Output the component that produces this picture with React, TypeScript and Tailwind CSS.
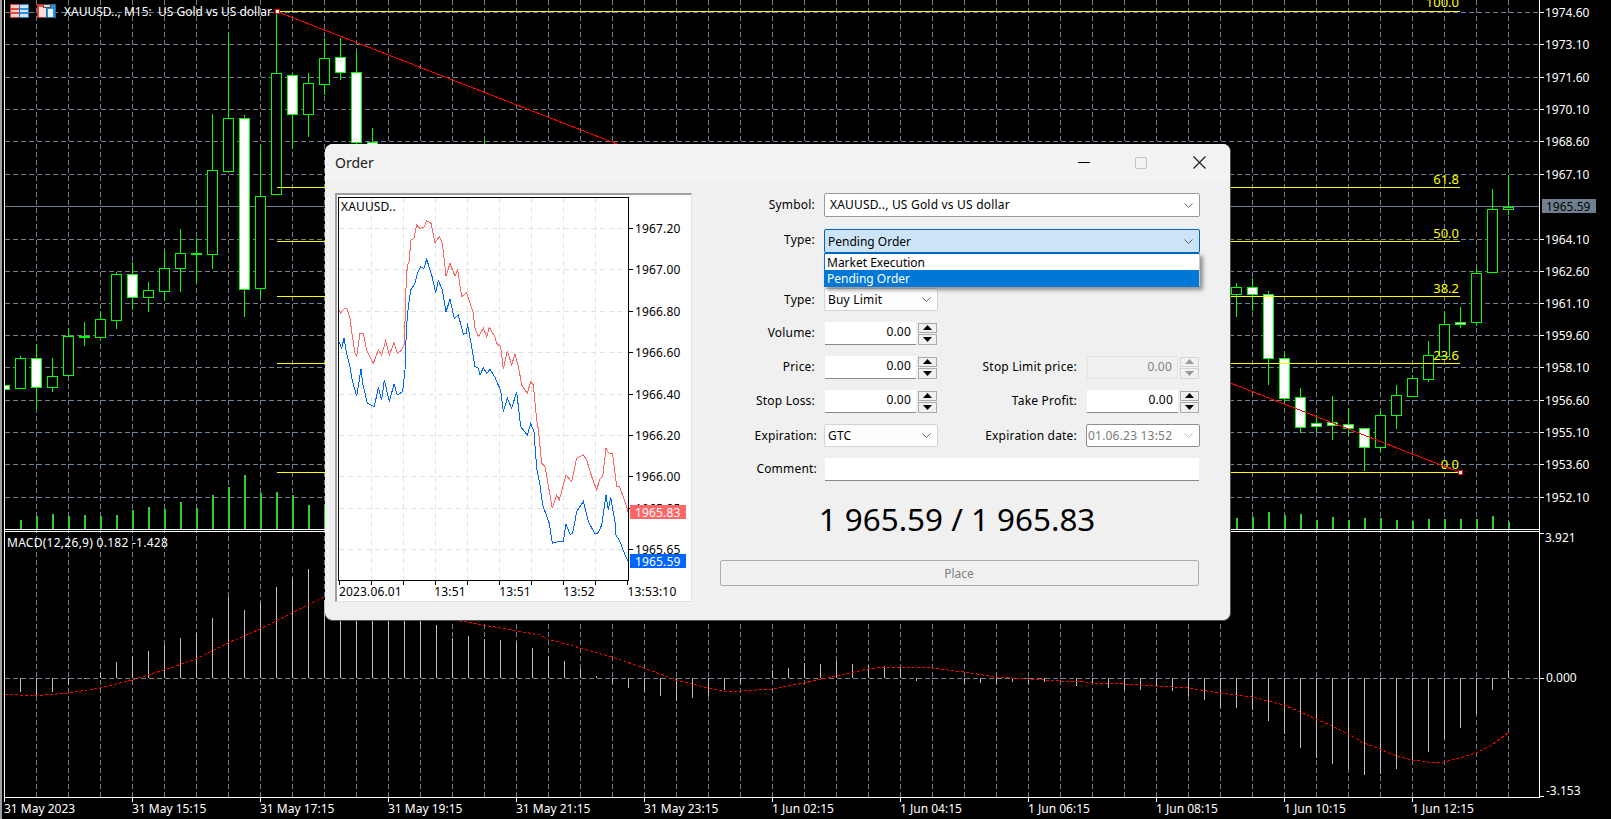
import React from 'react';

const GRID = '#708090';
const GREEN = '#00ff00';
const chartFont = '"Noto Sans", "Liberation Sans", sans-serif';

// [x, high, low, top, bottom, white], x = 4 + 16k
const candles: [number, number, number, number, number, number][] = [
    [4, 385, 389, 385, 389, 1],
    [20, 356, 389, 358, 388, 0],
    [36, 344, 410, 358, 387, 1],
    [52, 358, 392, 376, 387, 0],
    [68, 328, 377, 336, 375, 0],
    [84, 322, 346, 336, 337, 0],
    [100, 311, 339, 319, 337, 0],
    [116, 272, 329, 274, 320, 0],
    [132, 262, 310, 274, 297, 1],
    [148, 282, 312, 290, 297, 0],
    [164, 250, 301, 268, 291, 0],
    [180, 229, 292, 253, 268, 0],
    [196, 238, 283, 253, 254, 0],
    [212, 114, 269, 170, 254, 0],
    [228, 33, 171, 118, 171, 0],
    [244, 115, 317, 118, 289, 1],
    [260, 145, 298, 196, 288, 0],
    [276, 11, 194, 73, 194, 0],
    [292, 74, 149, 75, 114, 1],
    [308, 73, 137, 83, 114, 0],
    [324, 38, 95, 58, 84, 0],
    [340, 38, 80, 57, 72, 1],
    [356, 52, 144, 72, 142, 1],
    [372, 128, 150, 142, 150, 1],
    [484, 140, 150, 150, 150, 0],
    [1236, 283, 317, 287, 294, 0],
    [1252, 278, 311, 287, 294, 1],
    [1268, 291, 385, 294, 358, 1],
    [1284, 351, 403, 358, 398, 1],
    [1300, 388, 433, 397, 427, 1],
    [1316, 415, 432, 423, 426, 1],
    [1332, 396, 440, 422, 425, 1],
    [1348, 408, 435, 424, 428, 1],
    [1364, 428, 471, 428, 447, 1],
    [1380, 411, 452, 415, 447, 0],
    [1396, 385, 429, 395, 415, 0],
    [1412, 375, 396, 378, 396, 0],
    [1428, 341, 382, 355, 379, 0],
    [1444, 311, 356, 324, 356, 0],
    [1460, 307, 328, 322, 324, 1],
    [1476, 268, 326, 273, 322, 0],
    [1492, 189, 272, 209, 272, 0],
    [1508, 175, 215, 207, 209, 0],
];

const volumes: [number, number][] = [
    [20, 520], [36, 516], [52, 514], [68, 516], [84, 515], [100, 516], [116, 515], [132, 510], [148, 507], [164, 509],
    [180, 502], [196, 508], [212, 495], [228, 487], [244, 475], [260, 493], [276, 492], [292, 495], [308, 505], [324, 506],
    [1236, 518], [1252, 517], [1268, 512], [1284, 515], [1300, 514], [1316, 520], [1332, 517], [1348, 520], [1364, 518],
    [1380, 518], [1396, 520], [1412, 521], [1428, 519], [1444, 519], [1460, 519], [1476, 519], [1492, 516], [1508, 522],
];

// x, end of the bar (zero line at 678)
const macd: [number, number][] = [
    [20, 692], [36, 695], [52, 692], [68, 685], [84, 679], [100, 673], [116, 662], [132, 656], [148, 651], [164, 645],
    [180, 638], [196, 633], [212, 618], [228, 597], [244, 610], [260, 603], [276, 587], [292, 578], [308, 569],
    [324, 600], [340, 600], [356, 600], [372, 600], [388, 600], [404, 600], [420, 600],
    [436, 625], [452, 638], [468, 636], [484, 639], [500, 640], [516, 642], [532, 648], [548, 656], [564, 661], [580, 669],
    [596, 676], [612, 684], [628, 688], [644, 692], [660, 696], [676, 701], [692, 698], [708, 696], [724, 690], [740, 684],
    [756, 678], [772, 670], [788, 668], [804, 663], [820, 664], [836, 661], [852, 664], [868, 665], [884, 666], [900, 668],
    [916, 681], [932, 679], [964, 684], [980, 683], [996, 684], [1012, 682], [1028, 684], [1044, 682], [1060, 679], [1076, 686],
    [1092, 683], [1108, 688], [1124, 690], [1140, 690], [1156, 686], [1172, 691], [1188, 696], [1204, 700], [1220, 708],
    [1236, 708], [1252, 710], [1268, 721], [1284, 734], [1300, 748], [1316, 758], [1332, 764], [1348, 769], [1364, 775],
    [1380, 774], [1396, 769], [1412, 760], [1428, 752], [1444, 739], [1460, 728], [1476, 714], [1492, 690], [1508, 670],
];

const signal =
    '5,694 34,696 68,693 100,688 132,680 164,670 196,659 228,643 260,629 292,613 324,597 540,635 548,639 580,648 612,657 644,668 676,680 708,688 724,691 740,691 772,689 804,683 836,676 868,669 884,667 900,667 932,668 964,672 996,677 1028,679 1060,681 1076,682 1080,681 1092,683 1124,684 1156,686 1188,688 1220,693 1252,697 1268,701 1284,705 1300,712 1316,719 1332,726 1348,734 1364,743 1380,749 1396,756 1412,760 1428,762 1444,762 1460,758 1476,753 1492,745 1508,733';

const priceAxis: [number, string][] = [
    [12, '1974.60'], [44, '1973.10'], [77, '1971.60'], [109, '1970.10'], [141, '1968.60'], [174, '1967.10'], [239, '1964.10'],
    [271, '1962.60'], [303, '1961.10'], [335, '1959.60'], [367, '1958.10'], [400, '1956.60'], [432, '1955.10'], [464, '1953.60'], [497, '1952.10'],
];

const timeAxis: [number, string][] = [
    [4, '31 May 2023'], [132, '31 May 15:15'], [260, '31 May 17:15'], [388, '31 May 19:15'], [516, '31 May 21:15'], [644, '31 May 23:15'],
    [772, '1 Jun 02:15'], [900, '1 Jun 04:15'], [1028, '1 Jun 06:15'], [1156, '1 Jun 08:15'], [1284, '1 Jun 10:15'], [1412, '1 Jun 12:15'],
];

const fibs: [number, number, string][] = [
    [11, 7, '100.0'], [187, 184, '61.8'], [241, 238, '50.0'], [296, 293, '38.2'], [363, 360, '23.6'], [472, 469, '0.0'],
];

const gridX = Array.from({ length: 47 }, (_, i) => 36.5 + i * 32);

const MainChart: React.FC = () => (
    <svg width={1611} height={819} className="block" style={{ fontFamily: chartFont, fontSize: 12 }}>
        <g stroke={GRID} strokeDasharray="5 3" shapeRendering="crispEdges">
            {gridX.map(x => <line key={x} x1={x} y1={0} x2={x} y2={797} />)}
            {priceAxis.map(([y]) => <line key={y} x1={5} y1={y + 0.5} x2={1539} y2={y + 0.5} />)}
            <line x1={5} y1={678.5} x2={1539} y2={678.5} />
        </g>
        <line x1={5} y1={206.5} x2={1539} y2={206.5} stroke={GRID} shapeRendering="crispEdges" />

        <g shapeRendering="crispEdges">
            {volumes.map(([x, y]) => <rect key={x} x={x} y={y} width={2} height={529 - y} fill="#32cd32" />)}
            {macd.map(([x, y]) => (
                <line key={x} x1={x + 0.5} y1={Math.min(678, y)} x2={x + 0.5} y2={Math.max(678, y)} stroke="#c0c0c0" />
            ))}
            {candles.map(([x, hi, lo, top, bottom, white]) => (
                <g key={x}>
                    <line x1={x + 0.5} y1={hi} x2={x + 0.5} y2={lo} stroke={GREEN} />
                    <rect x={x - 4.5} y={top + 0.5} width={10} height={bottom - top} fill={white ? '#ffffff' : '#000000'} stroke={GREEN} />
                </g>
            ))}
            {/* window edge left of the price chart */}
            <rect x={2} y={0} width={3} height={819} fill="#000000" />
            <rect x={0} y={0} width={2} height={819} fill="#a0a0a0" />
        </g>

        <polyline points={signal} fill="none" stroke="#ff0000" strokeDasharray="3 2" shapeRendering="crispEdges" />

        <g stroke="#ffff00" shapeRendering="crispEdges">
            {fibs.map(([y]) => <line key={y} x1={277} y1={y + 0.5} x2={1460} y2={y + 0.5} />)}
        </g>
        {fibs.map(([y, t, label]) => (
            <text key={y} x={1459} y={t} textAnchor="end" fill="#ffff00" fontSize={13}>{label}</text>
        ))}

        <line x1={277} y1={11.5} x2={1460} y2={472.5} stroke="#ff0000" shapeRendering="crispEdges" />
        <rect x={275} y={9.5} width={4} height={4} fill="#ffffff" stroke="#ff0000" shapeRendering="crispEdges" />
        <rect x={1458} y={470.5} width={4} height={4} fill="#ffffff" stroke="#ff0000" shapeRendering="crispEdges" />

        <g stroke="#ffffff" shapeRendering="crispEdges">
            <line x1={4.5} y1={0} x2={4.5} y2={798} />
            <line x1={1539.5} y1={0} x2={1539.5} y2={798} />
            <line x1={4} y1={529.5} x2={1540} y2={529.5} />
            <line x1={4} y1={531.5} x2={1540} y2={531.5} />
            <line x1={4} y1={797.5} x2={1540} y2={797.5} />
            {priceAxis.map(([y]) => <line key={y} x1={1540} y1={y + 0.5} x2={1544} y2={y + 0.5} />)}
            <line x1={1540} y1={533.5} x2={1544} y2={533.5} />
            <line x1={1540} y1={678.5} x2={1544} y2={678.5} />
            <line x1={1540} y1={796.5} x2={1544} y2={796.5} />
            {timeAxis.map(([x]) => <line key={x} x1={x + 0.5} y1={798} x2={x + 0.5} y2={802} />)}
        </g>

        <g fill="#ffffff">
            {priceAxis.map(([y, label]) => <text key={y} x={1545} y={y + 4.5}>{label}</text>)}
            {timeAxis.map(([x, label]) => <text key={x} x={x} y={813}>{label}</text>)}
            <text x={1545} y={542}>3.921</text>
            <text x={1546} y={682}>0.000</text>
            <text x={1546} y={795}>-3.153</text>
            <text x={7} y={547} letterSpacing={0.27}>MACD(12,26,9) 0.182 -1.428</text>
            <text x={64} y={16}>XAUUSD.., M15:&nbsp; US Gold vs US dollar</text>
        </g>

        <rect x={1542} y={199} width={54} height={14} fill={GRID} />
        <text x={1546} y={211} fill="#000000">1965.59</text>

        {/* chart window icons */}
        <g shapeRendering="crispEdges">
            <rect x={10.5} y={4.5} width={9} height={13} fill="#f4d0c8" stroke="#d83a30" />
            <rect x={19.5} y={4.5} width={9} height={13} fill="#cfe6f8" stroke="#1f78c0" />
            <path d="M11 8.5h8M11 12.5h8" stroke="#e4483c" strokeWidth={2} fill="none" />
            <path d="M20 8.5h8M20 12.5h8" stroke="#2f8fd8" strokeWidth={2} fill="none" />
            <rect x={37.5} y={4.5} width={9} height={13} fill="#e4483c" stroke="#c03028" />
            <rect x={39} y={7} width={7} height={10} fill="#fbdcd4" />
            <rect x={46.5} y={4.5} width={9} height={13} fill="#2f8fd8" stroke="#1a6aa8" />
            <rect x={48} y={9} width={5} height={8} fill="#e6f2fb" />
            <rect x={43.5} y={4.5} width={7} height={3} fill="#d8d8d8" stroke="#505050" />
        </g>
    </svg>
);

const askLine = '57,510 62,520 70,508 80,505 90,535 95,575 105,640 110,650 120,580 130,580 140,630 160,670 175,630 185,645 197,602 208,645 222,608 232,640 245,630 253,612 258,445 262,375 268,365 272,300 282,295 290,255 300,265 312,262 320,242 333,250 345,308 358,290 367,310 378,408 390,370 405,408 413,390 425,470 440,458 460,520 465,565 475,590 490,565 500,590 508,562 525,590 530,610 542,620 550,688 562,632 575,675 585,642 595,680 603,722 605,735 622,760 632,725 640,735 650,840 655,868 665,970 675,980 697,1105 710,1065 718,1080 738,1005 755,1025 770,955 790,945 800,960 815,1010 830,1050 840,1017 848,1010 858,925 865,938 878,942 890,1038 898,1038 920,1100 925,1120';
const bidLine = '57,605 65,625 72,595 80,640 90,680 97,723 110,768 123,688 128,730 142,790 163,800 175,742 185,780 193,720 208,785 222,732 232,765 248,755 255,690 258,600 262,525 272,450 285,430 292,400 302,380 312,385 320,358 335,405 347,458 355,422 367,450 378,515 390,478 403,535 415,525 430,583 440,580 442,550 455,620 465,680 475,685 480,705 490,683 500,700 510,688 525,712 530,725 542,750 550,815 562,775 575,805 590,755 602,860 622,885 632,850 642,875 650,985 660,1035 668,1095 688,1150 697,1210 720,1203 730,1203 738,1152 750,1183 758,1180 770,1115 790,1085 805,1145 825,1182 835,1178 845,1155 858,1065 865,1110 872,1072 885,1145 888,1185 900,1205 915,1245 925,1265';

const miniPrices: [number, string][] = [
    [228, '1967.20'], [269, '1967.00'], [311, '1966.80'], [352, '1966.60'], [394, '1966.40'], [435, '1966.20'], [476, '1966.00'], [508, '1965.85'], [549, '1965.65'],
];
const miniX = [371.5, 403.5, 435.5, 467.5, 499.5, 531.5, 563.5, 595.5];
const miniTimes: [number, string][] = [[450, '13:51'], [515, '13:51'], [579, '13:52'], [652, '13:53:10']];

// viewBox is in page pixels so the numbers can be read straight off the picture
const MiniChart: React.FC = () => (
    <svg width={354} height={406} viewBox="337 195 354 406" className="block" style={{ fontFamily: chartFont, fontSize: 12 }}>
        <g stroke="#e2e2e2" strokeDasharray="5 4" shapeRendering="crispEdges">
            {miniPrices.map(([y]) => <line key={y} x1={339} y1={y + 0.5} x2={628} y2={y + 0.5} />)}
            {miniX.map(x => <line key={x} x1={x} y1={198} x2={x} y2={580} />)}
        </g>
        <svg x={339} y={198} width={289} height={382} viewBox="57 174 867 1146">
            <polyline points={askLine} fill="none" stroke="#ff6666" strokeWidth={3} shapeRendering="crispEdges" />
            <polyline points={bidLine} fill="none" stroke="#0066ff" strokeWidth={3} shapeRendering="crispEdges" />
        </svg>
        <g stroke="#000000" shapeRendering="crispEdges">
            <rect x={338.5} y={197.5} width={290} height={383} fill="none" />
            {miniPrices.map(([y]) => <line key={y} x1={629} y1={y + 0.5} x2={633} y2={y + 0.5} />)}
            <line x1={339.5} y1={581} x2={339.5} y2={585} />
            {miniX.map(x => <line key={x} x1={x} y1={581} x2={x} y2={585} />)}
            <line x1={627.5} y1={581} x2={627.5} y2={585} />
        </g>
        <g fill="#000000" letterSpacing={0.15}>
            <text x={341} y={211}>XAUUSD..</text>
            {miniPrices.map(([y, label]) => <text key={y} x={635} y={y + 4.5}>{label}</text>)}
            <text x={339} y={596}>2023.06.01</text>
            {miniTimes.map(([x, label]) => <text key={x} x={x} y={596} textAnchor="middle">{label}</text>)}
        </g>
        <rect x={630} y={505} width={56} height={14} fill="#ff6666" />
        <text x={635} y={516.5} fill="#ffffff" letterSpacing={0.15}>1965.83</text>
        <rect x={630} y={554} width={56} height={14} fill="#0066ff" />
        <text x={635} y={565.5} fill="#ffffff" letterSpacing={0.15}>1965.59</text>
    </svg>
);

const Chevron: React.FC<{ color?: string }> = ({ color = '#606060' }) => (
    <svg width={9} height={5} viewBox="0 0 9 5" className="shrink-0">
        <path d="M0.5 0.5 L4.5 4.5 L8.5 0.5" fill="none" stroke={color} />
    </svg>
);

const Select: React.FC<{ value: string; tone?: 'open' | 'flat' | 'plain' | 'muted' }> = ({ value, tone = 'plain' }) => {
    const looks = {
        plain: 'bg-white border-[#9a9a9a] pl-[5px]',
        open: 'bg-[#cce4f7] border-[#0067c0] pl-[3px] pt-[1px] tracking-normal',
        flat: 'bg-[#fdfdfd] border-[#d4d4d4] pl-[3px]',
        muted: 'bg-white border-[#8f8f8f] text-[#7a7a7a] pl-[1px]',
    }[tone];
    return (
        <div className={`-ml-px flex h-full items-center justify-between rounded-[2px] border pr-[6px] ${looks}`}>
            <span className="whitespace-nowrap">{value}</span>
            <Chevron color={tone === 'muted' ? '#b0b0b0' : '#606060'} />
        </div>
    );
};

const SpinButton: React.FC<{ up?: boolean; disabled?: boolean }> = ({ up, disabled }) => (
    <div className={`flex h-[11px] items-center justify-center border ${disabled ? 'border-[#d4d4d4]' : 'border-[#ababab]'}`}>
        <svg width={9} height={5} viewBox="0 0 9 5">
            <path d={up ? 'M4.5 0 L9 5 L0 5 Z' : 'M0 0 L9 0 L4.5 5 Z'} fill={disabled ? '#9a9a9a' : '#000000'} />
        </svg>
    </div>
);

const SpinInput: React.FC<{ disabled?: boolean }> = ({ disabled }) => (
    <div className="flex h-full w-[112px] justify-between">
        <div
            className={`flex w-[91px] items-center justify-end pr-[5px] pb-[2px] ${
                disabled ? 'border border-[#e4e4e4] bg-[#f0f0f0] text-[#808080]' : 'border-b border-[#8a8a8a] bg-white'
            }`}
        >
            0.00
        </div>
        <div className="flex w-[19px] flex-col gap-px pt-[0.5px]">
            <SpinButton up disabled={disabled} />
            <SpinButton disabled={disabled} />
        </div>
    </div>
);

const Row: React.FC<{
    label: string;
    height?: string;
    top: string;
    labelEnd?: string;
    nudge?: string;
    left: React.ReactNode;
    rightLabel?: string;
    right?: React.ReactNode;
    wide?: boolean;
}> = ({ label, height = 'h-[23px]', top, labelEnd = '', nudge = '', left, rightLabel, right, wide }) => (
    <div className={`flex items-center ${height} ${top}`}>
        <div className={`mr-[10px] w-[94px] shrink-0 text-right whitespace-nowrap ${nudge}`}>
            <span className={`inline-block ${labelEnd}`}>{label}</span>
        </div>
        <div className={`h-full ${wide ? 'w-[375px]' : 'w-[113px]'}`}>{left}</div>
        {rightLabel && <div className={`mr-[10px] w-[139px] text-right whitespace-nowrap ${nudge}`}>{rightLabel}</div>}
        {right && <div className="h-full w-[113px]">{right}</div>}
    </div>
);

const OrderDialog: React.FC = () => (
    <div
        className="absolute top-[144px] left-[325px] h-[477px] w-[906px] overflow-hidden rounded-[8px] border-r border-b border-[#505050] bg-[#f0f0f0] text-[12px] tracking-[0.2px] text-black"
        style={{ fontFamily: '"Noto Sans", "Liberation Sans", sans-serif' }}
    >
        <div className="flex h-[37px] items-center justify-between bg-[#f3f3f3]">
            <span className="pl-[10px] text-[14px] tracking-normal text-[#1a1a1a]">Order</span>
            <div className="flex items-center pr-[24px]">
                <div className="h-px w-[12px] bg-black" />
                <div className="ml-[45px] h-[12px] w-[12px] rounded-[2px] border border-[#c4c4c4]" />
                <svg width={13} height={13} viewBox="0 0 13 13" className="ml-[46px]">
                    <path d="M0.5 0.5 L12.5 12.5 M12.5 0.5 L0.5 12.5" stroke="#1a1a1a" strokeWidth={1.1} />
                </svg>
            </div>
        </div>

        <div className="flex pt-[12px] pl-[10px]">
            <div className="h-[409px] w-[357px] border-t-2 border-r border-b border-l-2 border-t-[#a0a0a0] border-r-[#e2e2e2] border-b-[#e2e2e2] border-l-[#a0a0a0] bg-white">
                <MiniChart />
            </div>

            <div className="relative ml-[29px] flex w-[480px] flex-col">
                <Row label="Symbol:" height="h-[24px]" top="mt-0" wide left={<Select value="XAUUSD.., US Gold vs US dollar" />} />
                <Row label="Type:" height="h-[24px]" top="mt-[12px]" nudge="pb-[2px]" wide left={<Select value="Pending Order" tone="open" />} />

                <div className="absolute top-[60px] left-[103px] w-[376px] border border-t-[#0067c0] border-r-[#c8c8c8] border-b-[#0078d7] border-l-[#0078d7] bg-white tracking-normal shadow-[3px_3px_4px_rgba(0,0,0,0.4)]">
                    <div className="flex h-[16px] items-center pt-[1px] pl-[2px]">Market Execution</div>
                    <div className="flex h-[16px] items-center bg-[#0078d7] pt-[1px] pl-[2px] text-white">Pending Order</div>
                </div>

                <Row label="Type:" top="mt-[35px]" left={<Select value="Buy Limit" tone="flat" />} />
                <Row label="Volume:" top="mt-[11px]" nudge="pb-[2px]" left={<SpinInput />} />
                <Row label="Price:" top="mt-[11px]" nudge="pb-[2px]" left={<SpinInput />} rightLabel="Stop Limit price:" right={<SpinInput disabled />} />
                <Row label="Stop Loss:" top="mt-[11px]" nudge="pb-[2px]" left={<SpinInput />} rightLabel="Take Profit:" right={<SpinInput />} />
                <Row
                    label="Expiration:"
                    labelEnd="-mr-[2px]"
                    height="h-[24px]"
                    top="mt-[10px]"
                    nudge="pt-[2px]"
                    left={<div className="h-full pt-px"><Select value="GTC" tone="flat" /></div>}
                    rightLabel="Expiration date:"
                    right={<div className="h-full pt-px"><Select value="01.06.23 13:52" tone="muted" /></div>}
                />
                <Row label="Comment:" labelEnd="-mr-[2px]" top="mt-[11px]" nudge="pb-[2px]" wide left={<div className="mr-px h-full border-b border-[#8a8a8a] bg-white" />} />

                <div className="mt-[19px] flex h-[40px] items-center justify-center pr-[8px] pb-[2px] text-[31.4px] tracking-normal whitespace-nowrap">1 965.59 / 1 965.83</div>

                <div className="mt-[20px] -ml-px flex h-[26px] w-[479px] items-center justify-center rounded-[2px] border border-[#adadad] pt-[2px] pr-[1px] tracking-normal text-[#808080]">Place</div>
            </div>
        </div>
    </div>
);

const App: React.FC = () => (
    <div className="relative h-[819px] w-[1611px] overflow-hidden bg-black">
        <MainChart />
        <OrderDialog />
    </div>
);

export default App;
